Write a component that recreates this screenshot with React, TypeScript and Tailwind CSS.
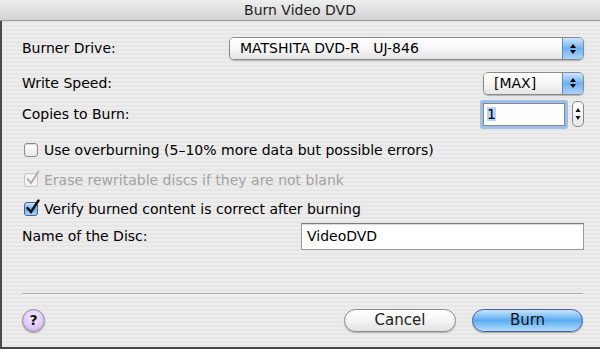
const font = "font-['DejaVu_Sans','Liberation_Sans',sans-serif]";

function Arrows({ color = "text-black" }: { color?: string }) {
  return (
    <svg width="8" height="12" viewBox="0 0 8 12" className={color}>
      <path d="M4 1 L7 5 L1 5 Z" fill="currentColor" />
      <path d="M4 11 L7 7 L1 7 Z" fill="currentColor" />
    </svg>
  );
}

function Popup({ label, width }: { label: string; width: string }) {
  return (
    <div
      className={`${width} h-[23px] flex rounded-[5px] border border-[#8a8a8a] overflow-hidden shadow-[0_1px_1px_rgba(0,0,0,0.25)]`}
    >
      <div className="flex-1 flex items-center pl-[10px] bg-gradient-to-b from-white via-[#f6f6f6] to-[#e4e4e4] text-black whitespace-pre">
        {label}
      </div>
      <div className="w-[21px] flex items-center justify-center border-l border-[#6b86b8] bg-gradient-to-b from-[#cfe6fb] via-[#6fb1f0] to-[#a9d4fa]">
        <Arrows />
      </div>
    </div>
  );
}

function Check({ state }: { state: "off" | "on" | "dim" }) {
  if (state === "on") {
    return (
      <div className="w-[14px] h-[14px] rounded-[3px] border border-[#49638f] bg-gradient-to-b from-[#cbe3fb] via-[#6ab0f0] to-[#a8d3fa] relative">
        <svg width="16" height="16" viewBox="0 0 16 16" className="absolute -top-[4px] left-[0px]">
          <path d="M2.5 9 L6 13 L13.5 1.5" stroke="#111" strokeWidth="2.4" fill="none" strokeLinecap="round" />
        </svg>
      </div>
    );
  }
  if (state === "dim") {
    return (
      <div className="w-[14px] h-[14px] rounded-[3px] border border-[#c4c4c4] bg-[#f3f3f3] relative">
        <svg width="16" height="16" viewBox="0 0 16 16" className="absolute -top-[4px] left-[0px]">
          <path d="M2.5 9 L6 13 L13.5 1.5" stroke="#a9a9a9" strokeWidth="1.8" fill="none" strokeLinecap="round" />
        </svg>
      </div>
    );
  }
  return (
    <div className="w-[14px] h-[14px] rounded-[3px] border border-[#8c8c8c] bg-gradient-to-b from-white to-[#e8e8e8] shadow-[inset_0_1px_1px_rgba(0,0,0,0.15)]" />
  );
}

export default function App() {
  return (
    <div
      className={`w-[600px] h-[349px] flex flex-col overflow-hidden text-[14px] text-black ${font} bg-[repeating-linear-gradient(0deg,#ededed_0px,#ededed_2px,#e6e6e6_2px,#e6e6e6_4px)]`}
    >
      <div className="h-[21px] shrink-0 flex items-center justify-center bg-gradient-to-b from-[#efefef] to-[#d3d3d3] border-b border-[#9a9a9a] text-[14px] text-[#222]">
        Burn Video DVD
      </div>

      <div className="flex-1 flex flex-col border-l-2 border-b-2 border-[#4a4a4a] pl-[20px] pr-[16px]">
        <div className="mt-[16px] h-[23px] flex items-center justify-between">
          <span>Burner Drive:</span>
          <Popup label="MATSHITA DVD-R   UJ-846" width="w-[355px]" />
        </div>

        <div className="mt-[12px] h-[22px] flex items-center justify-between">
          <span>Write Speed:</span>
          <Popup label="[MAX]" width="w-[101px]" />
        </div>

        <div className="mt-[5px] h-[30px] flex items-center justify-between">
          <span>Copies to Burn:</span>
          <div className="flex items-center gap-[4px]">
            <div className="w-[88px] h-[29px] rounded-[3px] border-[3px] border-[#9cc0ea] bg-white flex items-center">
              <div className="w-full h-full border border-[#8a8a8a] flex items-center pl-[3px]">
                <span className="bg-[#b5d5fc] leading-none">1</span>
              </div>
            </div>
            <div className="w-[12px] h-[26px] rounded-[5px] border border-[#8a8a8a] bg-gradient-to-b from-white to-[#e6e6e6] flex items-center justify-center">
              <svg width="6" height="16" viewBox="0 0 6 16">
                <path d="M3 2 L5.5 6 L0.5 6 Z" fill="#111" />
                <path d="M3 14 L5.5 10 L0.5 10 Z" fill="#111" />
              </svg>
            </div>
          </div>
        </div>

        <div className="mt-[13px] h-[16px] flex items-center gap-[6px] pl-[2px]">
          <Check state="off" />
          <span>Use overburning (5–10% more data but possible errors)</span>
        </div>

        <div className="mt-[14px] h-[16px] flex items-center gap-[6px] pl-[2px] text-[#a2a2a2]">
          <Check state="dim" />
          <span>Erase rewritable discs if they are not blank</span>
        </div>

        <div className="mt-[13px] h-[16px] flex items-center gap-[6px] pl-[2px]">
          <Check state="on" />
          <span>Verify burned content is correct after burning</span>
        </div>

        <div className="mt-[6px] h-[27px] flex items-center justify-between">
          <span>Name of the Disc:</span>
          <div className="w-[283px] h-[27px] border border-[#9a9a9a] border-t-[#7c7c7c] bg-white flex items-center pl-[5px] shadow-[inset_0_1px_1px_rgba(0,0,0,0.15)]">
            VideoDVD
          </div>
        </div>

        <div className="mt-[43px] h-[2px] border-t border-[#a9a9a9] border-b border-b-[#f7f7f7] mr-[1px]" />

        <div className="mt-[14px] flex items-center justify-between">
          <div className="w-[23px] h-[23px] rounded-full border border-[#8c8c8c] bg-[radial-gradient(circle_at_50%_35%,#f6ecff_0%,#e1c9fa_55%,#c8a6ef_100%)] flex items-center justify-center font-bold text-[14px] text-[#111] shadow-[0_1px_1px_rgba(0,0,0,0.3)]">
            ?
          </div>
          <div className="flex items-center gap-[16px] pr-[1px]">
            <div className="w-[112px] h-[23px] rounded-full border border-[#8a8a8a] bg-gradient-to-b from-white via-[#f4f4f4] to-[#e2e2e2] flex items-center justify-center text-[#222] text-[15px] shadow-[0_1px_1px_rgba(0,0,0,0.25)]">
              Cancel
            </div>
            <div className="w-[111px] h-[23px] rounded-full border border-[#4e5aa8] bg-gradient-to-b from-[#c6e3fb] via-[#58acef] to-[#b1defd] flex items-center justify-center text-[#111] text-[15px] shadow-[0_1px_1px_rgba(0,0,0,0.3)]">
              Burn
            </div>
          </div>
        </div>
      </div>
    </div>
  );
}
